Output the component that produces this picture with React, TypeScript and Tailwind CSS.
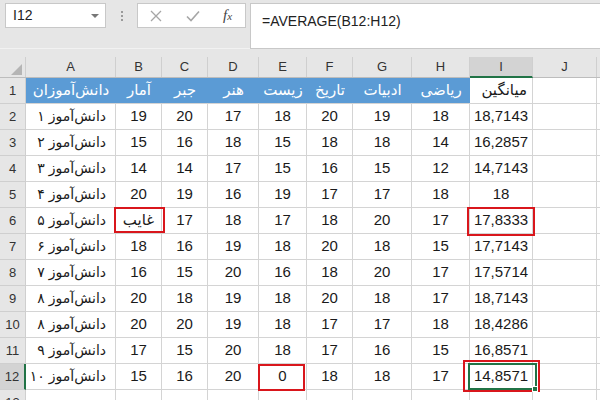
import React from "react";

const cols = [26, 90, 46, 46, 51, 48, 46, 59, 58, 63, 64, 40];
const letters = ["", "A", "B", "C", "D", "E", "F", "G", "H", "I", "J", ""];

const headers = ["دانش‌آموزان", "آمار", "جبر", "هنر", "زیست", "تاریخ", "ادبیات", "ریاضی"];

const rows: { name: string; vals: (string | number)[]; avg: string }[] = [
  { name: "دانش‌آموز ۱", vals: [19, 20, 17, 18, 20, 19, 18], avg: "18,7143" },
  { name: "دانش‌آموز ۲", vals: [15, 16, 18, 15, 18, 18, 14], avg: "16,2857" },
  { name: "دانش‌آموز ۳", vals: [14, 14, 17, 15, 16, 15, 12], avg: "14,7143" },
  { name: "دانش‌آموز ۴", vals: [20, 19, 16, 19, 17, 17, 18], avg: "18" },
  { name: "دانش‌آموز ۵", vals: ["غایب", 17, 18, 17, 18, 20, 17], avg: "17,8333" },
  { name: "دانش‌آموز ۶", vals: [18, 16, 19, 18, 20, 18, 15], avg: "17,7143" },
  { name: "دانش‌آموز ۷", vals: [16, 15, 20, 16, 18, 20, 17], avg: "17,5714" },
  { name: "دانش‌آموز ۸", vals: [20, 18, 19, 18, 20, 18, 17], avg: "18,7143" },
  { name: "دانش‌آموز ۸", vals: [20, 20, 19, 18, 17, 17, 18], avg: "18,4286" },
  { name: "دانش‌آموز ۹", vals: [17, 15, 20, 18, 17, 16, 15], avg: "16,8571" },
  { name: "دانش‌آموز ۱۰", vals: [15, 16, 20, 0, 18, 18, 17], avg: "14,8571" },
];

const font = "font-['Liberation_Sans','DejaVu_Sans',sans-serif]";

function RedBox({ className }: { className: string }) {
  return <div className={`absolute border-2 border-[#d9161c] pointer-events-none z-10 ${className}`} />;
}

export default function App() {
  return (
    <div className={`w-[600px] h-[400px] overflow-hidden bg-white ${font} text-[#1a1a1a]`}>
      {/* formula bar */}
      <div className="h-[57px] bg-[#e6e6e6] flex flex-col">
        <div className="h-[49px] flex items-start pt-[3px] pl-[5px] border-b border-[#f2f2f2]">
          <div className="w-[101px] h-[25px] bg-white border border-[#c8c8c8] flex items-center justify-between pl-[7px] pr-[6px]">
            <span className="text-[14px] text-[#222]">I12</span>
            <span className="w-0 h-0 border-l-[4px] border-r-[4px] border-t-[4px] border-l-transparent border-r-transparent border-t-[#777]" />
          </div>
          <div className="w-[31px] h-[25px] flex flex-col items-center justify-center gap-[2px]">
            <span className="w-[2px] h-[2px] bg-[#9a9a9a]" />
            <span className="w-[2px] h-[2px] bg-[#9a9a9a]" />
            <span className="w-[2px] h-[2px] bg-[#9a9a9a]" />
          </div>
          <div className="w-[109px] h-[25px] bg-white border border-[#c8c8c8] flex items-center">
            <svg width="12" height="12" viewBox="0 0 12 12" className="ml-[12px]">
              <path d="M1 1 L11 11 M11 1 L1 11" stroke="#a6a6a6" strokeWidth="1.3" fill="none" />
            </svg>
            <svg width="14" height="12" viewBox="0 0 14 12" className="ml-[24px]">
              <path d="M1 6.5 L5 10.5 L13 1.5" stroke="#a6a6a6" strokeWidth="1.6" fill="none" />
            </svg>
            <span className="ml-[23px] font-['Liberation_Serif',serif] italic text-[15px] text-[#444] leading-none">
              f<span className="text-[11px]">x</span>
            </span>
          </div>
          <div className="ml-[4px] flex-1 h-[46px] bg-white border border-r-0 border-[#c8c8c8] pl-[11px] pt-[5px]">
            <span className="text-[14px] text-[#222]">=AVERAGE(B12:H12)</span>
          </div>
        </div>
      </div>

      {/* column headers */}
      <div className="flex h-[21px] bg-[#e6e6e6] border-b border-[#bdbdbd]">
        {cols.map((w, i) => (
          <div
            key={i}
            style={{ width: w }}
            className={`shrink-0 flex items-center justify-center text-[13px] text-[#333] border-r border-[#cfcfcf] ${
              i === 9 ? "bg-[#d3d3d3] border-b-2 border-b-[#217346] -mb-px" : ""
            }`}
          >
            {i === 0 ? (
              <span className="self-end ml-auto mr-[3px] mb-[2px] w-0 h-0 border-l-[11px] border-b-[11px] border-l-transparent border-b-[#b5b5b5]" />
            ) : (
              letters[i]
            )}
          </div>
        ))}
      </div>

      {/* row 1 */}
      <div className="flex h-[26px]">
        <div className="w-[26px] shrink-0 bg-[#e6e6e6] border-r border-b border-[#cfcfcf] flex items-center justify-center text-[13px] text-[#333]">
          1
        </div>
        {headers.map((h, i) => (
          <div
            key={i}
            style={{ width: cols[i + 1] }}
            dir="rtl"
            className="shrink-0 bg-[#5b9bd5] text-white text-[15px] whitespace-nowrap flex items-center justify-center border-b border-[#d4d4d4]"
          >
            {h}
          </div>
        ))}
        <div dir="rtl" className="w-[63px] shrink-0 border-r border-b border-[#d4d4d4] flex items-center pr-[5px] text-[15px] whitespace-nowrap">
          میانگین
        </div>
        <div className="w-[64px] shrink-0 border-r border-b border-[#d4d4d4]" />
        <div className="w-[40px] shrink-0 border-b border-[#d4d4d4]" />
      </div>

      {rows.map((r, ri) => {
        const rowNum = ri + 2;
        const sel = rowNum === 12;
        return (
          <div key={ri} className="flex h-[26px]">
            <div
              className={`w-[26px] shrink-0 border-b border-[#cfcfcf] flex items-center justify-center text-[13px] text-[#333] ${
                sel ? "bg-[#d3d3d3] border-r-2 border-r-[#217346]" : "bg-[#e6e6e6] border-r"
              }`}
            >
              {rowNum}
            </div>
            <div dir="rtl" className="w-[90px] shrink-0 border-r border-b border-[#d4d4d4] flex items-center pr-[9px] text-[14px] whitespace-nowrap overflow-hidden">
              {r.name}
            </div>
            {r.vals.map((v, vi) => (
              <div
                key={vi}
                style={{ width: cols[vi + 2] }}
                className="relative shrink-0 border-r border-b border-[#d4d4d4] flex items-center justify-center text-[15px]"
              >
                {v}
                {rowNum === 6 && vi === 0 && <RedBox className="-left-[2px] -top-px w-[51px] h-[26px]" />}
                {rowNum === 12 && vi === 3 && <RedBox className="-left-px top-0 w-[47px] h-[27px]" />}
              </div>
            ))}
            <div className="relative w-[63px] shrink-0 border-r border-b border-[#d4d4d4] flex items-center justify-center text-[15px]">
              {r.avg}
              {rowNum === 6 && <RedBox className="-left-[3px] -top-px w-[68px] h-[29px]" />}
              {sel && (
                <>
                  <div className="absolute -left-[2px] -top-px w-[69px] h-[27px] border-2 border-[#217346] z-10" />
                  <div className="absolute left-[62px] top-[22px] w-[6px] h-[6px] bg-[#217346] border border-white z-20" />
                  <RedBox className="-left-[7px] -top-[4px] w-[77px] h-[32px]" />
                </>
              )}
            </div>
            <div className="w-[64px] shrink-0 border-r border-b border-[#d4d4d4]" />
            <div className="w-[40px] shrink-0 border-b border-[#d4d4d4]" />
          </div>
        );
      })}

      {/* row 13 */}
      <div className="flex h-[26px]">
        <div className="w-[26px] shrink-0 bg-[#e6e6e6] border-r border-[#cfcfcf] flex items-center justify-center text-[13px] text-[#333]">
          13
        </div>
        {cols.slice(1).map((w, i) => (
          <div key={i} style={{ width: w }} className="shrink-0 border-r border-[#d4d4d4]" />
        ))}
      </div>
    </div>
  );
}
